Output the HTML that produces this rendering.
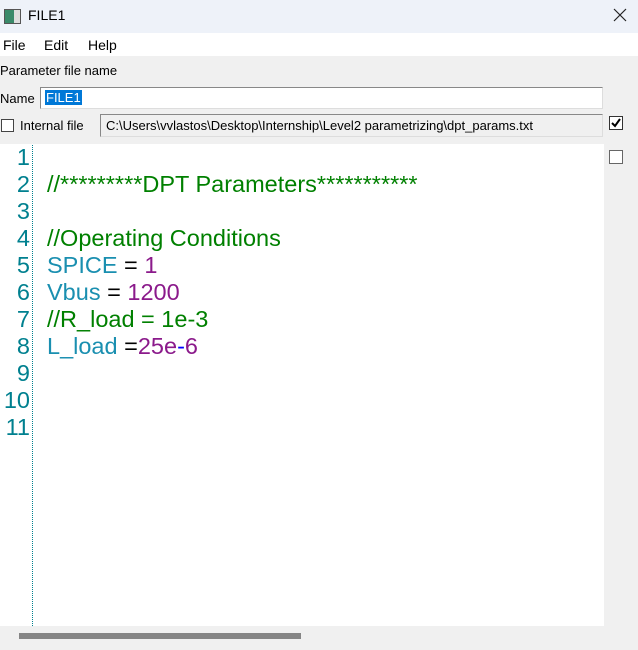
<!DOCTYPE html>
<html><head><meta charset="utf-8"><style>
body{margin:0;width:638px;height:650px;background:#f0f0f0;font-family:"Liberation Sans",Arial,sans-serif;position:relative;overflow:hidden}
.a{position:absolute}
.cb{position:absolute;width:12px;height:12px;background:#fff;border:1px solid #333;box-sizing:border-box}
.ln{position:absolute;left:0;width:30px;text-align:right;color:#00808f}
.code{position:absolute;left:47px;white-space:pre}
.g{color:#008000}.b{color:#1a8fb0}.p{color:#8b1a8b}.k{color:#000}
</style></head><body>
<div class="a" style="left:0;top:0;width:638px;height:33px;background:#eef2f9"></div>
<div class="a" style="left:4px;top:9px;width:15px;height:13px;border:1px solid #555;background:linear-gradient(90deg,#3a8a6a 0 60%,#ddd 60%)"></div>
<div class="a" style="left:28px;top:7px;font-size:14px">FILE1</div>
<svg class="a" style="left:613px;top:8px" width="14" height="14"><path d="M1 1L13 13M13 1L1 13" stroke="#222" stroke-width="1.2"/></svg>
<div class="a" style="left:0;top:33px;width:638px;height:23px;background:#fff"></div>
<div class="a" style="left:3px;top:37px;font-size:14px">File</div>
<div class="a" style="left:44px;top:37px;font-size:14px">Edit</div>
<div class="a" style="left:88px;top:37px;font-size:14px">Help</div>
<div class="a" style="left:0;top:63px;font-size:13px">Parameter file name</div>
<div class="a" style="left:0;top:91px;font-size:13px">Name</div>
<div class="a" style="left:40px;top:87px;width:563px;height:22px;background:#fff;border:1px solid #888;border-bottom-color:#ddd;border-right-color:#ddd;box-sizing:border-box"></div>
<div class="a" style="left:45px;top:90px;background:#0078d7;color:#fff;font-size:13px;padding:0 1px;line-height:15px">FILE1</div>
<div class="cb" style="left:1px;top:119px;width:13px;height:13px;border-color:#444"></div>
<div class="a" style="left:20px;top:118px;font-size:13px">Internal file</div>
<div class="a" style="left:100px;top:114px;width:503px;height:23px;background:#f0f0f0;border:1px solid #888;border-bottom-color:#ddd;border-right-color:#ddd;box-sizing:border-box"></div>
<div class="a" style="left:106px;top:118px;font-size:13px;letter-spacing:0">C:\Users\vvlastos\Desktop\Internship\Level2 parametrizing\dpt_params.txt</div>
<div class="cb" style="left:609px;top:116px;width:14px;height:14px"></div>
<svg class="a" style="left:610px;top:117px" width="12" height="12"><path d="M2 6L5 9L10 2" stroke="#000" stroke-width="2" fill="none"/></svg>
<div class="cb" style="left:609px;top:150px;width:14px;height:14px;border-color:#666"></div>
<div class="a" style="left:0;top:144px;width:604px;height:482px;background:#fff"></div>
<div class="a" style="left:32px;top:145px;height:481px;border-left:1px dotted #00808f"></div>
<div class="a" style="left:0;top:144px;width:604px;font-size:23.5px;line-height:27px">
<div class="ln" style="top:0">1</div><div class="ln" style="top:27px">2</div><div class="ln" style="top:54px">3</div><div class="ln" style="top:81px">4</div><div class="ln" style="top:108px">5</div><div class="ln" style="top:135px">6</div><div class="ln" style="top:162px">7</div><div class="ln" style="top:189px">8</div><div class="ln" style="top:216px">9</div><div class="ln" style="top:243px">10</div><div class="ln" style="top:270px">11</div>
<div class="code g" style="top:27px">//*********DPT Parameters***********</div>
<div class="code g" style="top:81px">//Operating Conditions</div>
<div class="code" style="top:108px"><span class="b">SPICE</span><span class="k"> = </span><span class="p">1</span></div>
<div class="code" style="top:135px"><span class="b">Vbus</span><span class="k"> = </span><span class="p">1200</span></div>
<div class="code g" style="top:162px">//R_load = 1e-3</div>
<div class="code" style="top:189px"><span class="b">L_load</span><span class="k"> =</span><span class="p">25e</span><span style="color:#00f">-</span><span class="p">6</span></div>
</div>
<div class="a" style="left:19px;top:633px;width:282px;height:6px;background:#858585"></div>
</body></html>
